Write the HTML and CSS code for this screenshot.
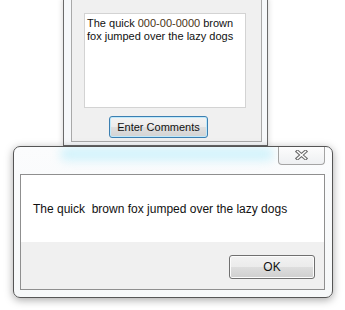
FILE: index.html
```html
<!DOCTYPE html>
<html>
<head>
<meta charset="utf-8">
<link rel="stylesheet" href="styles.css">
</head>
<body>
<div class="desk">
  <div class="bgwin">
    <div class="bgclient">
      <div class="tbox"><span>The quick </span><span class="ssn">000-00-0000</span><span> brown</span><br><span>fox jumped over the lazy dogs</span></div>
      <button class="btn-enter">Enter Comments</button>
    </div>
  </div>
  <div class="dlg">
    <div class="glow"></div>
    <div class="closebtn">
      <svg width="13" height="10" viewBox="0 0 13 10">
        <path d="M2.5 1.5 L10.5 8.5 M10.5 1.5 L2.5 8.5" stroke="#6f6f6f" stroke-width="3.6" stroke-linecap="square" fill="none"/>
        <path d="M2.5 1.5 L10.5 8.5 M10.5 1.5 L2.5 8.5" stroke="#ffffff" stroke-width="1.4" stroke-linecap="square" fill="none"/>
      </svg>
    </div>
    <div class="dclient">
      <div class="msgarea">
        <div class="msg">The quick  brown fox jumped over the lazy dogs</div>
      </div>
      <div class="dfoot">
        <button class="ok">OK</button>
      </div>
    </div>
  </div>
</div>
</body>
</html>
```
FILE: styles.css
```css
html, body {
  margin: 0;
  padding: 0;
  background: #ffffff;
  width: 345px;
  height: 310px;
  overflow: hidden;
}
.desk {
  position: relative;
  width: 345px;
  height: 310px;
  font-family: "Liberation Sans", Arial, sans-serif;
}
.bgwin {
  position: absolute;
  left: 63px;
  top: -2px;
  width: 205px;
  height: 148px;
  box-sizing: border-box;
  border: 1px solid #6a6a6a;
  background: #f6f8fa;
  padding: 0 5px 3px 7px;
  box-shadow: 0 0 6px rgba(0,0,0,0.18);
}
.bgclient {
  height: 100%;
  box-sizing: border-box;
  background: #f0f0f0;
  border: 1px solid #a9a9a9;
  border-top: none;
  padding: 14px 0 0 12px;
  display: flex;
  flex-direction: column;
  align-items: flex-start;
}
.tbox {
  width: 162px;
  height: 95px;
  box-sizing: border-box;
  background: #ffffff;
  border: 1px solid #d3d3d3;
  padding: 3px 2px;
  font-size: 11px;
  line-height: 13px;
  color: #111111;
  white-space: nowrap;
}
.ssn {
  color: #4a3418;
}
.btn-enter {
  margin: 8px 0 0 25px;
  width: 99px;
  height: 22px;
  box-sizing: border-box;
  border: 1px solid #3c7fb1;
  border-radius: 3px;
  box-shadow: inset 0 0 0 1px #bfe9fb;
  background: linear-gradient(#f3f3f3 0%, #ececec 50%, #dfdfdf 51%, #d3d3d3 100%);
  font-family: "Liberation Sans", Arial, sans-serif;
  font-size: 11px;
  color: #111111;
  padding: 0;
}
.dlg {
  position: absolute;
  left: 13px;
  top: 146px;
  width: 320px;
  height: 152px;
  box-sizing: border-box;
  border: 1px solid #555555;
  border-radius: 7px;
  background: linear-gradient(#fbfcfd, #f6f8f9);
  padding: 27px 7px 7px 6px;
  box-shadow: 0 2px 8px rgba(0,0,0,0.35);
  overflow: hidden;
}
.glow {
  position: absolute;
  left: 46px;
  top: 0px;
  width: 214px;
  height: 14px;
  background: rgba(190, 238, 250, 0.65);
  border-radius: 8px;
  filter: blur(5px);
}
.closebtn {
  position: absolute;
  right: 7px;
  top: -1px;
  width: 47px;
  height: 19px;
  box-sizing: border-box;
  border: 1px solid #a4a4a4;
  border-top: none;
  border-radius: 0 0 4px 4px;
  background: linear-gradient(#fdfdfd, #eef0f2);
  display: flex;
  align-items: center;
  justify-content: center;
}
.closebtn svg {
  display: block;
}
.dclient {
  position: relative;
  height: 100%;
  box-sizing: border-box;
  border: 1px solid #8f8f8f;
  display: flex;
  flex-direction: column;
}
.msgarea {
  height: 67px;
  background: #ffffff;
  padding: 26px 0 0 12px;
  box-sizing: border-box;
}
.msg {
  font-size: 12px;
  line-height: 16px;
  color: #111111;
  white-space: pre;
}
.dfoot {
  flex: 1;
  background: #f0f0f0;
  display: flex;
  justify-content: flex-end;
  align-items: flex-start;
  padding: 13px 9px 0 0;
}
.ok {
  width: 86px;
  height: 24px;
  box-sizing: border-box;
  border: 1px solid #707070;
  border-radius: 3px;
  background: linear-gradient(#f2f2f2 0%, #ebebeb 50%, #dddddd 51%, #cfcfcf 100%);
  box-shadow: inset 0 0 0 1px #fcfcfc;
  font-family: "Liberation Sans", Arial, sans-serif;
  font-size: 12px;
  color: #111111;
  padding: 0;
}
```
